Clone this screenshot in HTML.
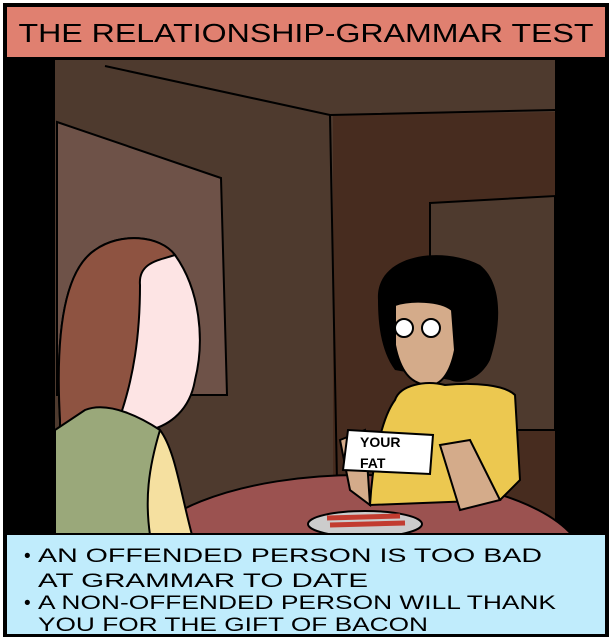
<!DOCTYPE html><html><head><style>body{margin:0;background:#fff}svg{display:block}text{font-family:"Liberation Sans",sans-serif;}</style></head><body>
<svg width="612" height="639" viewBox="0 0 612 639" xmlns="http://www.w3.org/2000/svg">
<rect x="0" y="0" width="612" height="639" fill="#fff"/>
<rect x="3" y="3" width="606" height="634" fill="#000"/>
<!-- room -->
<rect x="55" y="60" width="500" height="475" fill="#4e3a2e"/>
<polygon points="333,115 555,112 555,535 333,535" fill="#472c1f"/>
<polygon points="430,203 555,196 555,430 430,430" fill="#4e3a2e" stroke="#000" stroke-width="2"/>
<polygon points="57,122 221,178 227,395 57,395" fill="#6e5248" stroke="#000" stroke-width="2"/>
<path d="M105,66 L330,115 L555,110 M330,115 L338,535" stroke="#000" stroke-width="2" fill="none"/>
<!-- table -->
<clipPath id="c"><rect x="0" y="0" width="612" height="535"/></clipPath>
<g clip-path="url(#c)">
<ellipse cx="360" cy="565" rx="225" ry="90" fill="#9b5250" stroke="#000" stroke-width="2"/>
<ellipse cx="365" cy="524" rx="57" ry="13" fill="#ccc" stroke="#000" stroke-width="2"/>
<path d="M327,518 L400,516 M330,525 L405,523" stroke="#c23c30" stroke-width="5"/>
</g>
<!-- woman -->
<path d="M378,300 C375,255 440,245 480,265 C505,285 500,330 490,360 C480,380 460,385 450,380 L395,370 C380,350 378,320 378,300Z" fill="#000"/>
<path d="M395,305 C410,300 440,300 452,310 L455,350 C450,375 440,385 430,385 C410,385 400,370 395,345 Z" fill="#d4ab8a" stroke="#000" stroke-width="2"/>
<circle cx="404" cy="328" r="9" fill="#fff" stroke="#000" stroke-width="2"/>
<circle cx="431" cy="328" r="9" fill="#fff" stroke="#000" stroke-width="2"/>
<path d="M395,400 C400,385 425,380 445,385 C475,382 505,385 515,395 L520,480 L500,500 L370,505 C372,470 380,420 395,400Z" fill="#ecc850" stroke="#000" stroke-width="2"/>
<path d="M340,440 L365,430 L370,505 L350,490Z M440,445 L470,440 L500,500 L460,510Z" fill="#d4ab8a" stroke="#000" stroke-width="2"/>
<polygon points="348,430 433,435 430,474 343,470" fill="#fff" stroke="#000" stroke-width="2"/>
<text x="360" y="447" font-size="14" font-weight="bold">YOUR</text>
<text x="360" y="468" font-size="14" font-weight="bold">FAT</text>
<!-- man -->
<path d="M60,420 C55,330 65,270 95,250 C120,232 160,235 175,255 C200,290 205,340 195,380 C190,410 170,425 150,430 Z" fill="#fde4e4" stroke="#000" stroke-width="2"/>
<path d="M60,420 C55,330 65,270 95,250 C120,232 160,235 175,255 C160,260 138,262 140,285 C140,330 135,380 115,430 L60,430Z" fill="#8e5341" stroke="#000" stroke-width="2"/>
<path d="M55,430 L85,410 C110,400 145,420 160,430 C170,450 175,490 190,535 L55,535Z" fill="#9aa87a" stroke="#000" stroke-width="2"/>
<path d="M160,430 C175,450 180,490 192,535 L150,535 C145,500 148,470 160,430Z" fill="#f5e0a0" stroke="#000" stroke-width="2"/>
<!-- title -->
<rect x="6" y="6" width="600" height="52" fill="#e08070" stroke="#000" stroke-width="2"/>
<text x="306" y="42" font-size="26" text-anchor="middle" textLength="575" lengthAdjust="spacingAndGlyphs">THE RELATIONSHIP-GRAMMAR TEST</text>
<!-- caption -->
<rect x="6" y="534" width="600" height="101" fill="#c0ecfc" stroke="#000" stroke-width="2"/>
<g font-size="19">
<text x="24" y="562">•</text><text x="38" y="562" textLength="504" lengthAdjust="spacingAndGlyphs">AN OFFENDED PERSON IS TOO BAD</text>
<text x="38" y="587" textLength="330" lengthAdjust="spacingAndGlyphs">AT GRAMMAR TO DATE</text>
<text x="24" y="609">•</text><text x="38" y="609" textLength="518" lengthAdjust="spacingAndGlyphs">A NON-OFFENDED PERSON WILL THANK</text>
<text x="38" y="631" textLength="390" lengthAdjust="spacingAndGlyphs">YOU FOR THE GIFT OF BACON</text>
</g>
</svg></body></html>
